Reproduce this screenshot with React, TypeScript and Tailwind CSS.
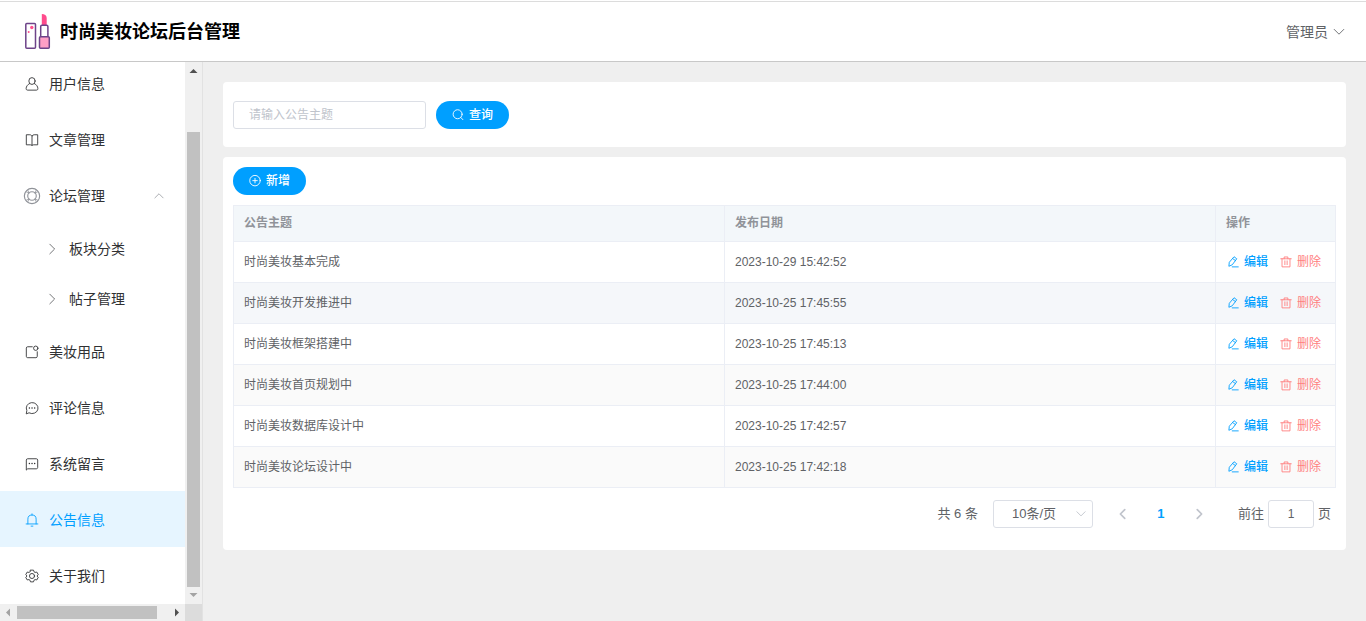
import { useState } from 'react';
import type { ReactNode } from 'react';
import clsx from 'clsx';

interface IconProps {
  children: ReactNode;
  className?: string;
}

function Icon({ children, className }: IconProps) {
  return (
    <svg
      viewBox="0 0 16 16"
      fill="none"
      stroke="currentColor"
      strokeLinecap="round"
      strokeLinejoin="round"
      className={clsx('shrink-0', className)}
      aria-hidden="true"
    >
      {children}
    </svg>
  );
}

const icons = {
  user: (
    <>
      <ellipse cx="8" cy="4.6" rx="3.6" ry="3.900" />
      <path d="M5.200 7.500C2.900 8.700 1.300 10.900 1.300 13.200c0 1.300.6 1.800 1.800 1.800h9.800c1.200 0 1.800-.5 1.800-1.800 0-2.300-1.600-4.500-3.900-5.700" />
    </>
  ),
  reading: (
    <path d="M8 3.500C7.500 2.500 6.500 2 5.500 2h-4v11.500H6c1 0 1.700.2 2 .9.300-.7 1-.9 2-.9h4.500V2h-4C9.500 2 8.500 2.500 8 3.500v10.900" />
  ),
  help: (
    <>
      <circle cx="8" cy="8" r="6.800" />
      <circle cx="8" cy="8" r="3.800" />
      <path d="M5.300 5.300 4.200 2.700M5.300 5.300 2.700 4.200M10.700 5.300l1.100-2.600M10.700 5.300l2.600-1.100M5.300 10.700l-1.100 2.600M5.300 10.700l-2.600 1.100M10.700 10.700l1.100 2.600M10.700 10.700l2.600 1.100" strokeWidth="0.7" />
    </>
  ),
  product: (
    <>
      <path d="M8.300 2H3c-.9 0-1.500.6-1.500 1.500v9.500c0 .9.600 1.500 1.500 1.500h9.500c.9 0 1.500-.6 1.500-1.500V7.700" />
      <circle cx="12.300" cy="3.700" r="2.500" />
    </>
  ),
  chatRound: (
    <>
      <path d="M1.500 14.300 2.100 10.800A6.700 6.300 0 1 1 5 13.700z" />
      <path d="M5 8h.1M8 8h.1M11 8h.1" strokeWidth="1.600" />
    </>
  ),
  chatSquare: (
    <>
      <path d="M1.500 14.500V3.500c0-.9.600-1.500 1.500-1.500h10c.9 0 1.500.6 1.500 1.500V12c0 .9-.6 1.500-1.500 1.500H3.500z" />
      <path d="M5 7.500h.1M8 7.500h.1M11 7.500h.1" strokeWidth="1.600" />
    </>
  ),
  bell: <path d="M1.300 12.500h13.400M3.300 12.500V7a4.700 4.700 0 0 1 9.400 0v5.500M8 2.300V1M7 15h2" />,
  setting: (
    <>
      <circle cx="8" cy="8" r="2.900" />
      <path d="M6.300 1.300h3.400l.6 1.900 1.200.7 2-.4 1.600 2.900L13.700 8l1.400 1.600-1.600 2.900-2-.4-1.200.7-.6 1.900H6.300l-.6-1.900-1.200-.7-2 .4L.9 9.600 2.300 8 .9 6.400l1.600-2.900 2 .4 1.200-.7z" />
    </>
  ),
  up: <path d="m2.500 10.500 5.500-5.500 5.500 5.500" />,
  down: <path d="m2.500 5 5.500 5.500L13.500 5" />,
  left: <path d="M10 3 5 8l5 5" />,
  right: <path d="m6 3 5 5-5 5" />,
  submenu: <path d="m5.500 2.500 5.500 5.500-5.500 5.500" />,
  search: (
    <>
      <circle cx="7.500" cy="7" r="6" />
      <path d="m12 11.500 2.500 2.700" />
    </>
  ),
  plus: (
    <>
      <circle cx="8" cy="7.500" r="7" />
      <path d="M8 4.500v6M5 7.500h6" />
    </>
  ),
  edit: <path d="M9.800 1.300 13 3.700 7 11.700 2.500 13.700l.5-4.800zM8 3.700l3.200 2.400M7 14.500h8" />,
  trash: <path d="M1 3.700h14M5.500 3.700V1.300h5v2.400M2.700 3.700v10.800h10.600V3.700M6.500 6.500v5M9.500 6.500v5" />,
};

interface MenuItem {
  label: string;
  icon: ReactNode;
  muted?: boolean;
  children?: string[];
}

const menu: MenuItem[] = [
  { label: '用户信息', icon: icons.user },
  { label: '文章管理', icon: icons.reading },
  { label: '论坛管理', icon: icons.help, muted: true, children: ['板块分类', '帖子管理'] },
  { label: '美妆用品', icon: icons.product },
  { label: '评论信息', icon: icons.chatRound },
  { label: '系统留言', icon: icons.chatSquare },
  { label: '公告信息', icon: icons.bell },
  { label: '关于我们', icon: icons.setting },
];

const notices = [
  { title: '时尚美妆基本完成', date: '2023-10-29 15:42:52' },
  { title: '时尚美妆开发推进中', date: '2023-10-25 17:45:55' },
  { title: '时尚美妆框架搭建中', date: '2023-10-25 17:45:13' },
  { title: '时尚美妆首页规划中', date: '2023-10-25 17:44:00' },
  { title: '时尚美妆数据库设计中', date: '2023-10-25 17:42:57' },
  { title: '时尚美妆论坛设计中', date: '2023-10-25 17:42:18' },
];

function Logo() {
  return (
    <svg viewBox="0 0 28 38" className="h-[38px] w-7" fill="none" stroke="#6d4389" strokeWidth="1.5" aria-hidden="true">
      <rect x="1.800" y="10.500" width="9.700" height="24.700" rx="1" />
      <circle cx="7.800" cy="14.500" r="1.700" fill="#ff4f8e" stroke="none" />
      <circle cx="4.700" cy="19" r="1" fill="#ff4f8e" stroke="none" />
      <path d="M17.800 12V1c2.800 0 4.900 1.500 4.900 4v7z" fill="#ff4b8c" stroke="none" />
      <path d="M16.700 23.500V13.500c0-.8.500-1.300 1.300-1.300h4.600c.8 0 1.300.5 1.300 1.300v10" fill="#fff" />
      <rect x="15.500" y="23.700" width="9.800" height="11.500" rx="1" fill="#ff9fc6" />
    </svg>
  );
}

function Header() {
  return (
    <header className="h-[62px] shrink-0 border-b border-[#c8c8c8] bg-white pt-px">
      <div className="flex h-full items-center justify-between border-t border-[#dcdcdc] pr-5 pl-6">
        <div className="flex items-center gap-2">
          <Logo />
          <h1 className="text-lg font-bold text-black">时尚美妆论坛后台管理</h1>
        </div>
        <button type="button" className="flex items-center gap-1 text-sm text-[#606266]">
          管理员
          <Icon className="size-3.5">{icons.down}</Icon>
        </button>
      </div>
    </header>
  );
}

function Sidebar() {
  const [active, setActive] = useState('公告信息');
  const [open, setOpen] = useState(true);

  return (
    <aside className="grid w-[203px] shrink-0 grid-cols-[1fr_17px] grid-rows-[minmax(0,1fr)_17px] border-r border-[#e2e2e2] bg-white">
      <nav className="flex flex-col justify-end overflow-hidden pb-px text-sm text-[#303133]">
        {menu.map((item) => (
          <div key={item.label} className="shrink-0">
            <button
              type="button"
              onClick={() => (item.children ? setOpen(!open) : setActive(item.label))}
              className={clsx(
                'flex h-14 w-full items-center px-5 pt-0.5',
                active === item.label && 'bg-[#e6f5ff] text-[#009fff]',
              )}
            >
              <span className={clsx('mr-[5px] flex w-6 justify-center', item.muted && 'text-[#909399]')}>
                <Icon className={item.muted ? 'size-[18px]' : 'size-3.5'}>{item.icon}</Icon>
              </span>
              {item.label}
              {item.children && <Icon className="ml-auto size-3 text-[#909399]">{open ? icons.up : icons.down}</Icon>}
            </button>
            {open &&
              item.children?.map((child) => (
                <a key={child} href="#" className="flex h-[50px] items-center pt-0.5 pl-10">
                  <span className="mr-[5px] flex w-6 justify-center text-[#606266]">
                    <Icon className="size-3.5">{icons.submenu}</Icon>
                  </span>
                  {child}
                </a>
              ))}
          </div>
        ))}
      </nav>

      <div className="flex flex-col items-center bg-[#f0f0f0]">
        <ScrollArrow points="4.500,11 8.500,7 12.500,11" className="fill-[#505050]" />
        <div className="mt-[53px] w-[13px] flex-1 bg-[#c1c1c1]" />
        <ScrollArrow points="4.500,6 8.500,10 12.500,6" className="fill-[#a3a3a3]" />
      </div>
      <div className="flex items-center bg-[#f0f0f0]">
        <ScrollArrow points="10,4.500 6,8.500 10,12.500" className="fill-[#a3a3a3]" />
        <div className="mr-[11px] h-[13px] flex-1 bg-[#c1c1c1]" />
        <ScrollArrow points="7,4.500 11,8.500 7,12.500" className="fill-[#505050]" />
      </div>
      <div className="bg-[#dcdcdc]" />
    </aside>
  );
}

function ScrollArrow({ points, className }: { points: string; className: string }) {
  return (
    <svg viewBox="0 0 17 17" className={clsx('size-[17px] shrink-0', className)} aria-hidden="true">
      <polygon points={points} />
    </svg>
  );
}

function PillButton({ icon, label }: { icon: ReactNode; label: string }) {
  return (
    <button
      type="button"
      className="flex h-7 items-center gap-[5px] rounded-full bg-[#009fff] px-4 text-xs font-medium text-white"
    >
      <Icon className="size-3 stroke-[1.2]">{icon}</Icon>
      {label}
    </button>
  );
}

function NoticeTable() {
  return (
    <table className="mt-2.5 w-full table-fixed border-collapse text-left text-xs text-[#606266]">
      <colgroup>
        <col />
        <col />
        <col className="w-[120px]" />
      </colgroup>
      <thead>
        <tr className="h-9 bg-[#f3f7fa] text-[#909399]">
          <th className="border border-[#ebeef5] px-2.5 pb-0.5 font-bold">公告主题</th>
          <th className="border border-[#ebeef5] px-2.5 pb-0.5 font-bold">发布日期</th>
          <th className="border border-[#ebeef5] px-2.5 pb-0.5 font-bold">操作</th>
        </tr>
      </thead>
      <tbody>
        {notices.map((notice, i) => (
          <tr
            key={notice.title}
            className={clsx('h-[41px] hover:bg-[#f5f7fa]', i === 1 ? 'bg-[#f5f7fa]' : i % 2 === 1 && 'bg-[#fafafa]')}
          >
            <td className="border border-[#ebeef5] px-2.5">{notice.title}</td>
            <td className="border border-[#ebeef5] px-2.5">{notice.date}</td>
            <td className="border border-[#ebeef5] px-2.5">
              <div className="flex gap-3 pl-px">
                <button type="button" className="flex items-center gap-[5px] font-medium text-[#009fff]">
                  <Icon className="size-3 stroke-[1.2]">{icons.edit}</Icon>
                  编辑
                </button>
                <button type="button" className="flex items-center gap-[5px] text-[#ff7f7f]">
                  <Icon className="size-3 stroke-[1.2]">{icons.trash}</Icon>
                  删除
                </button>
              </div>
            </td>
          </tr>
        ))}
      </tbody>
    </table>
  );
}

function Pagination() {
  const [page, setPage] = useState('1');

  return (
    <div className="mt-3 flex h-7 items-center justify-end pr-[5px] text-[13px] text-[#606266]">
      <span className="mr-[15px]">共 6 条</span>
      <div className="relative mr-[11px]">
        <select
          aria-label="每页条数"
          className="h-7 w-[100px] appearance-none rounded-[3px] border border-[#dcdfe6] bg-white pl-[18px] text-[13px]"
        >
          <option>10条/页</option>
          <option>20条/页</option>
          <option>50条/页</option>
        </select>
        <Icon className="pointer-events-none absolute top-2 right-1.5 size-3 stroke-[1.2] text-[#c0c4cc]">
          {icons.down}
        </Icon>
      </div>
      <button type="button" aria-label="上一页" className="flex w-[38px] justify-center text-[#c0c4cc]">
        <Icon className="size-3.5 stroke-2">{icons.left}</Icon>
      </button>
      <button type="button" className="w-[38px] text-center font-bold text-[#009fff]">
        1
      </button>
      <button type="button" aria-label="下一页" className="mr-5 flex w-[38px] justify-center text-[#c0c4cc]">
        <Icon className="size-3.5 stroke-2">{icons.right}</Icon>
      </button>
      <label className="flex items-center gap-1">
        前往
        <input
          value={page}
          onChange={(e) => setPage(e.target.value)}
          className="h-7 w-[46px] rounded-[3px] border border-[#dcdfe6] bg-white text-center text-xs"
        />
        页
      </label>
    </div>
  );
}

export default function App() {
  return (
    <div className="flex h-screen flex-col bg-[#efefef] font-['Liberation_Sans','Noto_Sans_CJK_SC',sans-serif]">
      <Header />
      <div className="flex min-h-0 flex-1">
        <Sidebar />
        <main className="min-w-0 flex-1 overflow-auto p-5">
          <form className="flex items-center gap-2.5 rounded bg-white px-2.5 pt-[19px] pb-[18px]">
            <input
              type="text"
              aria-label="公告主题"
              placeholder="请输入公告主题"
              className="h-7 w-[193px] rounded-[3px] border border-[#dcdfe6] px-[15px] text-xs text-[#606266] placeholder:text-[#c0c4cc]"
            />
            <PillButton icon={icons.search} label="查询" />
          </form>
          <section className="mt-2.5 rounded bg-white px-2.5 pt-2.5 pb-[22px]">
            <PillButton icon={icons.plus} label="新增" />
            <NoticeTable />
            <Pagination />
          </section>
        </main>
      </div>
    </div>
  );
}
